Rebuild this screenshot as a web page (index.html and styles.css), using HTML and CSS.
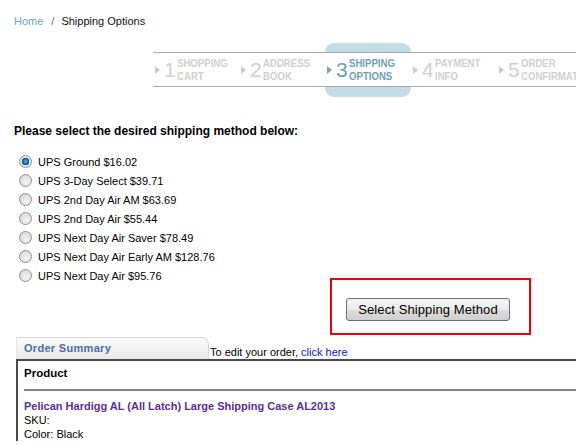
FILE: index.html
```html
<!DOCTYPE html>
<html>
<head>
<meta charset="utf-8">
<link rel="stylesheet" href="styles.css">
</head>
<body>
<div class="page">
  <div class="crumbs"><a class="crumb-link" href="#">Home</a><span class="sep">/</span><span class="crumb-cur">Shipping Options</span></div>

  <div class="steps">
    <div class="step"><div class="band"><span class="arrow"></span><span class="num">1</span><span class="lbl">SHOPPING<br>CART</span></div></div>
    <div class="step"><div class="band"><span class="arrow"></span><span class="num">2</span><span class="lbl">ADDRESS<br>BOOK</span></div></div>
    <div class="step active"><div class="band"><span class="arrow"></span><span class="num">3</span><span class="lbl">SHIPPING<br>OPTIONS</span></div></div>
    <div class="step"><div class="band"><span class="arrow"></span><span class="num">4</span><span class="lbl">PAYMENT<br>INFO</span></div></div>
    <div class="step"><div class="band"><span class="arrow"></span><span class="num">5</span><span class="lbl">ORDER<br>CONFIRMATION</span></div></div>
  </div>

  <h2 class="prompt">Please select the desired shipping method below:</h2>

  <div class="methods">
    <label class="method"><input type="radio" name="ship" checked> UPS Ground $16.02</label>
    <label class="method"><input type="radio" name="ship"> UPS 3-Day Select $39.71</label>
    <label class="method"><input type="radio" name="ship"> UPS 2nd Day Air AM $63.69</label>
    <label class="method"><input type="radio" name="ship"> UPS 2nd Day Air $55.44</label>
    <label class="method"><input type="radio" name="ship"> UPS Next Day Air Saver $78.49</label>
    <label class="method"><input type="radio" name="ship"> UPS Next Day Air Early AM $128.76</label>
    <label class="method"><input type="radio" name="ship"> UPS Next Day Air $95.76</label>
  </div>

  <div class="highlight">
    <button class="btn" type="button">Select Shipping Method</button>
  </div>

  <div class="tabrow">
    <div class="tab">Order Summary</div>
    <div class="edit">To edit your order, <a class="edit-link" href="#">click here</a></div>
  </div>
  <div class="summary">
    <div class="col-head">Product</div>
    <div class="rule"></div>
    <div class="prod-name">Pelican Hardigg AL (All Latch) Large Shipping Case AL2013</div>
    <div class="prod-line">SKU:</div>
    <div class="prod-line">Color: Black</div>
  </div>
</div>
</body>
</html>
```
FILE: styles.css
```css
html, body {
  margin: 0;
  padding: 0;
  background: #fff;
  overflow: hidden;
}
body {
  font-family: "Liberation Sans", Arial, sans-serif;
  font-size: 11px;
  color: #000;
}
.page {
  width: 576px;
  height: 445px;
  overflow: hidden;
}

/* breadcrumb */
.crumbs {
  padding: 14px 0 0 14px;
  height: 15px;
  line-height: 14px;
  font-size: 11px;
}
.crumb-link {
  color: #5fa3d3;
  text-decoration: none;
}
.sep {
  color: #666;
  margin: 0 7px 0 8px;
}
.crumb-cur { color: #111; }

/* step bar */
.steps {
  display: flex;
  margin: 14px 0 0 153px;
  width: 440px;
}
.step {
  flex: 0 0 86px;
  min-width: 0;
  padding: 9px 0 10px;
  border-radius: 9px;
}
.step.active { background: #c2dde7; }
.band {
  height: 33px;
  background: #fff;
  border-top: 1px solid #a9a9a9;
  border-bottom: 1px solid #a9a9a9;
  display: flex;
  align-items: center;
  color: #d0d0d0;
  white-space: nowrap;
  overflow: hidden;
}
.step:last-child .band { overflow: visible; }
.arrow {
  flex: none;
  width: 0;
  height: 0;
  margin-left: 2px;
  border-left: 5px solid #cdcdcd;
  border-top: 4px solid transparent;
  border-bottom: 4px solid transparent;
}
.num {
  flex: none;
  font-size: 21px;
  line-height: 20px;
  margin-left: 4px;
  width: 13px;
}
.lbl {
  flex: none;
  display: inline-block;
  margin-left: 0;
  font-family: "Liberation Sans", Arial, sans-serif;
  font-weight: bold;
  font-size: 10.8px;
  line-height: 12.5px;
  transform: scaleX(0.89);
  transform-origin: 0 50%;
}
.step.active .band { color: #6f9db7; }
.step.active .arrow { border-left-color: #7ba6be; }

/* prompt */
.prompt {
  margin: 27px 0 0 14px;
  font-size: 12px;
  line-height: 15px;
  font-weight: bold;
}

/* methods */
.methods {
  display: flex;
  flex-direction: column;
  margin: 13px 0 0 14px;
}
.method {
  display: flex;
  align-items: center;
  height: 19px;
  font-size: 11px;
  white-space: pre;
}
.method input {
  -webkit-appearance: none;
  appearance: none;
  flex: none;
  width: 13px;
  height: 13px;
  margin: 0 3px 0 5px;
  border-radius: 50%;
  border: 1px solid #8e8f8f;
  background: radial-gradient(circle at 60% 65%, #f4f4f4 0, #dcdcdc 70%, #cfcfcf 100%);
  box-sizing: border-box;
}
.method input:checked {
  background: radial-gradient(circle at 50% 50%, #5ab1ea 0, #1a6db1 2.5px, #0f4f89 3.5px, #e8e8e8 4px, #d6d6d6 100%);
}

/* highlight box with button */
.highlight {
  margin: -7px 0 0 330px;
  border: 2px solid #f00000;
  padding: 18px 0 0 14px;
  box-sizing: border-box;
  height: 57px;
  width: 201px;
}
.btn {
  width: 164px;
  height: 23px;
  margin: 0;
  padding: 0;
  font-family: "Liberation Sans", Arial, sans-serif;
  font-size: 13px;
  letter-spacing: 0.1px;
  color: #000;
  border: 1px solid #707070;
  border-radius: 3px;
  background: linear-gradient(#f3f3f3 0, #ebebeb 50%, #dddddd 51%, #cfcfcf 100%);
}

/* order summary tab */
.tabrow {
  display: flex;
  align-items: flex-end;
  margin: 2px 0 0 16px;
  height: 22px;
}
.tab {
  width: 184px;
  height: 21px;
  padding-left: 7px;
  border-top: 1px solid #d6d6d6;
  border-right: 1px solid #d6d6d6;
  border-left: 1px solid #e4e4e4;
  border-top-right-radius: 7px;
  background: linear-gradient(#fbfbfb, #e9e9e9);
  color: #4c6fa6;
  font-weight: bold;
  font-size: 11px;
  line-height: 21px;
  letter-spacing: 0.3px;
}
.edit {
  margin-left: 1px;
  font-size: 11px;
  line-height: 14px;
}
.edit-link {
  color: #1010d0;
  text-decoration: none;
}
.summary {
  margin-left: 16px;
  border-top: 2px solid #4a4a4a;
  border-left: 2px solid #4a4a4a;
  padding: 5px 0 0 6px;
}
.col-head {
  font-weight: bold;
  font-size: 11.5px;
  line-height: 15px;
}
.rule {
  height: 2px;
  background: #858585;
  margin: 8px 0 9px;
}
.prod-name {
  color: #5e2d93;
  font-weight: bold;
  font-size: 11px;
  line-height: 13px;
}
.prod-line {
  font-size: 11px;
  line-height: 14px;
}
```
